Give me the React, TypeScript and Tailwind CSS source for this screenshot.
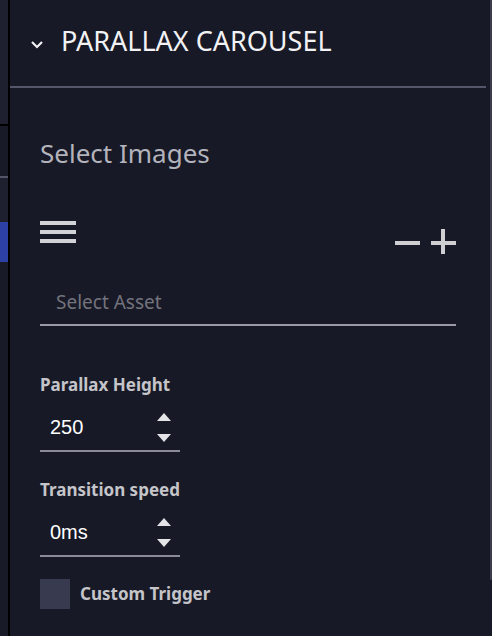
import React from 'react';

const NumberField = ({ value }: { value: string }) => (
  <div className="w-[140px] h-[48px] flex items-center justify-between pl-[10px] pr-[9px] border-b-2 border-[#8a8b96]">
    <span className="text-[20px] text-white font-['Liberation_Sans',Arial,sans-serif]">{value}</span>
    <div className="flex flex-col gap-[13px]">
      <svg width="14" height="8" viewBox="0 0 14 8"><path d="M0 8 L7 0 L14 8 Z" fill="#e4e4e8" /></svg>
      <svg width="14" height="8" viewBox="0 0 14 8"><path d="M0 0 L14 0 L7 8 Z" fill="#e4e4e8" /></svg>
    </div>
  </div>
);

const App = () => {
  return (
    <div className="relative w-[492px] h-[636px] overflow-hidden flex bg-[#171926] font-['Noto_Sans',sans-serif]">
      {/* collapsed side rail */}
      <div className="w-[10px] flex flex-col border-r-2 border-black">
        <div className="h-[126px] bg-[#1e2030] border-b-2 border-black" />
        <div className="h-[52px] bg-[#181a28] border-b-2 border-[#55566a]" />
        <div className="h-[44px] bg-[#1e2030]" />
        <div className="h-[40px] bg-[#2d40a6]" />
        <div className="flex-1 bg-[#181a28]" />
      </div>

      <div className="flex-1 flex flex-col">
        {/* header */}
        <div className="h-[88px] flex items-center pl-[20px] gap-[17px] border-b-2 border-[#55566a] mr-[6px]">
          <svg width="14" height="9" viewBox="0 0 14 9" className="mt-[2px]">
            <path d="M2 2 L7 7 L12 2" fill="none" stroke="#f2f2f4" strokeWidth="2.2" />
          </svg>
          <h1 className="text-[27px] text-[#f2f2f4] leading-none mb-[6px]">PARALLAX CAROUSEL</h1>
        </div>

        <div className="pl-[30px] pr-[36px] flex flex-col">
          <h2 className="mt-[47px] text-[26px] leading-[36px] text-[#b3b3bc]">Select Images</h2>

          <div className="mt-[50px] flex justify-between items-start">
            <div className="w-[36px] flex flex-col gap-[5px]">
              <div className="h-[4px] bg-[#d2d2d6]" />
              <div className="h-[4px] bg-[#d2d2d6]" />
              <div className="h-[4px] bg-[#d2d2d6]" />
            </div>
            <svg width="62" height="26" viewBox="0 0 62 26" className="mt-[8px] mr-[-1px]">
              <rect x="0" y="12" width="25" height="4" fill="#cfcfd3" />
              <rect x="36" y="12" width="25" height="4" fill="#cfcfd3" />
              <rect x="46" y="0" width="4" height="25" fill="#cfcfd3" />
            </svg>
          </div>

          <div className="mt-[26px] h-[45px] flex items-center pl-[16px] border-b-2 border-[#9a9aa5]">
            <span className="text-[19px] text-[#73737c]">Select Asset</span>
          </div>

          <label className="mt-[48px] text-[17px] font-bold text-[#c4c4c9] leading-[22px]">Parallax Height</label>
          <div className="mt-[8px]"><NumberField value="250" /></div>

          <label className="mt-[27px] text-[17px] font-bold text-[#c4c4c9] leading-[22px]">Transition speed</label>
          <div className="mt-[8px]"><NumberField value="0ms" /></div>

          <div className="mt-[22px] flex items-center gap-[10px]">
            <div className="w-[30px] h-[30px] bg-[#383a50]" />
            <span className="text-[17px] font-bold text-[#c4c4c9]">Custom Trigger</span>
          </div>
        </div>
      </div>

      {/* scrollbar thumb */}
      <div className="absolute right-0 top-0 w-[2px] h-[580px] bg-[#3b3c4b] rounded-b-sm" />
    </div>
  );
};

export default App;
